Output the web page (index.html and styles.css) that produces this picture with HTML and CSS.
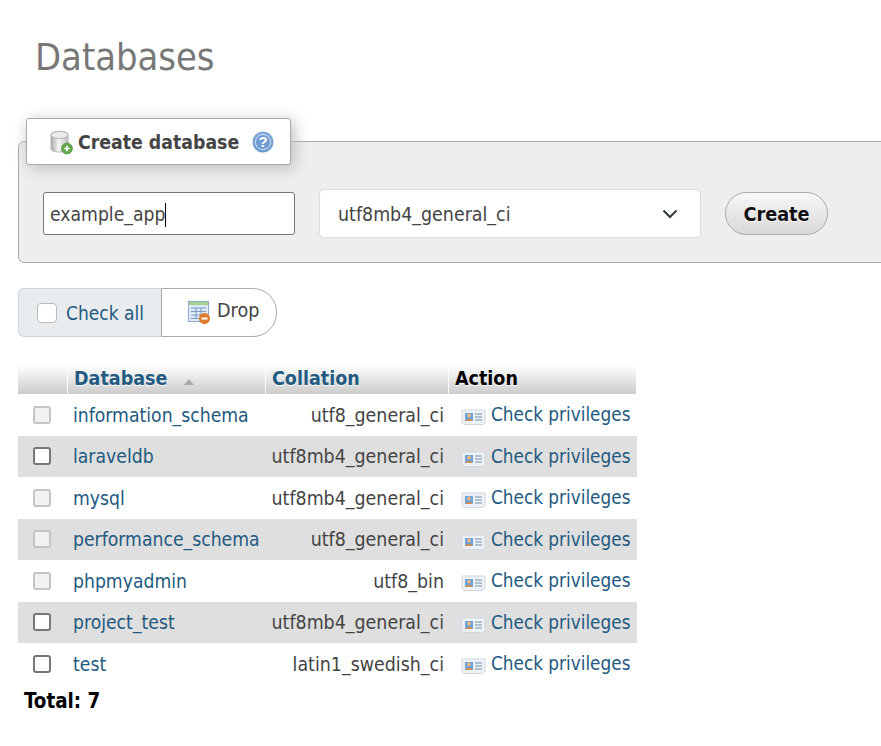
FILE: index.html
```html
<!DOCTYPE html>
<html lang="en">
<head>
<meta charset="utf-8">
<title>Databases</title>
<link rel="stylesheet" href="styles.css">
</head>
<body>
<div class="page">
  <h1 class="title">Databases</h1>
  <section class="panel">
    <div class="legend">
      <svg class="legend-icon" width="24" height="25" viewBox="0 0 24 25"><defs><linearGradient id="cyl" x1="0" x2="1" y1="0" y2="0"><stop offset="0" stop-color="#a8a8a8"/><stop offset=".45" stop-color="#f6f6f6"/><stop offset="1" stop-color="#bdbdbd"/></linearGradient></defs><path d="M1 5c0-5 17-5 17 0v14c0 4-17 4-17 0z" fill="url(#cyl)" stroke="#b4b4b4"/><ellipse cx="9.500" cy="5" rx="8.500" ry="3.500" fill="#ececec" stroke="#b4b4b4"/><circle cx="17" cy="18.500" r="5.500" fill="#65a84e" stroke="#4c8a3a" stroke-width=".6"/><path d="M14.300 18.500h5.400M17 15.800v5.400" stroke="#fff" stroke-width="1.700"/></svg>
      <span class="legend-text">Create database</span>
      <svg class="help-icon" width="22" height="22" viewBox="0 0 22 22"><defs><radialGradient id="hlp" cx=".5" cy=".45" r=".6"><stop offset="0" stop-color="#c5d9f0"/><stop offset=".7" stop-color="#7ba5d8"/><stop offset="1" stop-color="#5a8cc8"/></radialGradient></defs><circle cx="11" cy="11" r="10.500" fill="url(#hlp)"/><circle cx="11" cy="11" r="7.500" fill="#6f9bd2" stroke="#c9dcf2"/><text x="11" y="16" class="help-mark" text-anchor="middle">?</text></svg>
    </div>
    <form class="create-form">
      <div class="text-input">example_app<span class="caret"></span></div>
      <div class="select"><span>utf8mb4_general_ci</span><svg width="16" height="10" viewBox="0 0 16 10"><path d="M1.500 1.500 8 8l6.500-6.500" fill="none" stroke="#343a40" stroke-width="2"/></svg></div>
      <button type="button" class="create-btn">Create</button>
    </form>
  </section>

  <div class="bulk">
    <label class="check-all"><span class="box box-light"></span>Check all</label>
    <div class="drop">
      <svg width="24" height="25" viewBox="0 0 24 25"><rect x="1.500" y="1.500" width="20" height="20" fill="#dfe9f6" stroke="#8cabd3"/><rect x="2" y="2" width="19" height="3" fill="#a8d08d"/><path d="M4 8h15M4 11.500h15M4 15h15M4 18.500h15M9 8v11M14 8v11" stroke="#7d9cc4"/><circle cx="17.500" cy="18.500" r="5.500" fill="#e07b29"/><rect x="14.500" y="17.500" width="6" height="2" fill="#fff"/></svg>
      <span>Drop</span>
    </div>
  </div>

  <table class="db-table">
    <thead>
      <tr>
        <th class="col-check"></th>
        <th class="col-db"><span class="th-link">Database</span><span class="sort"></span></th>
        <th class="col-coll"><span class="th-link">Collation</span></th>
        <th class="col-action"><span class="th-plain">Action</span></th>
      </tr>
    </thead>
    <tbody>
      <tr><td class="cell-check"><span class="box box-off"></span></td><td class="cell-name">information_schema</td><td class="cell-coll">utf8_general_ci</td><td class="cell-action"><svg class="priv" width="25" height="19" viewBox="0 0 25 19"><use href="#card"/></svg>Check privileges</td></tr>
      <tr><td class="cell-check"><span class="box"></span></td><td class="cell-name">laraveldb</td><td class="cell-coll">utf8mb4_general_ci</td><td class="cell-action"><svg class="priv" width="25" height="19" viewBox="0 0 25 19"><use href="#card"/></svg>Check privileges</td></tr>
      <tr><td class="cell-check"><span class="box box-off"></span></td><td class="cell-name">mysql</td><td class="cell-coll">utf8mb4_general_ci</td><td class="cell-action"><svg class="priv" width="25" height="19" viewBox="0 0 25 19"><use href="#card"/></svg>Check privileges</td></tr>
      <tr><td class="cell-check"><span class="box box-off"></span></td><td class="cell-name">performance_schema</td><td class="cell-coll">utf8_general_ci</td><td class="cell-action"><svg class="priv" width="25" height="19" viewBox="0 0 25 19"><use href="#card"/></svg>Check privileges</td></tr>
      <tr><td class="cell-check"><span class="box box-off"></span></td><td class="cell-name">phpmyadmin</td><td class="cell-coll">utf8_bin</td><td class="cell-action"><svg class="priv" width="25" height="19" viewBox="0 0 25 19"><use href="#card"/></svg>Check privileges</td></tr>
      <tr><td class="cell-check"><span class="box"></span></td><td class="cell-name">project_test</td><td class="cell-coll">utf8mb4_general_ci</td><td class="cell-action"><svg class="priv" width="25" height="19" viewBox="0 0 25 19"><use href="#card"/></svg>Check privileges</td></tr>
      <tr><td class="cell-check"><span class="box"></span></td><td class="cell-name">test</td><td class="cell-coll">latin1_swedish_ci</td><td class="cell-action"><svg class="priv" width="25" height="19" viewBox="0 0 25 19"><use href="#card"/></svg>Check privileges</td></tr>
    </tbody>
  </table>
  <div class="total">Total: 7</div>
</div>
<svg class="defs" width="0" height="0"><defs><g id="card"><path d="M1 3h23v12.500l-2 2H3l-2-2z" fill="#eef2f7" stroke="#d0d7df"/><rect x="4" y="6" width="8" height="8" fill="#6aa3df"/><circle cx="8" cy="8.500" r="2" fill="#e9b384"/><path d="M4.500 14c.5-3 6.500-3 7 0z" fill="#d08c4e"/><path d="M14 7h7M14 10h7M14 13h7" stroke="#9bb0c6" stroke-width="1.300"/></g></defs></svg>
</body>
</html>
```
FILE: styles.css
```css
* { box-sizing: border-box; }
html, body { margin: 0; padding: 0; background: #fff; overflow: hidden; }
body { height: 746px; font-family: "DejaVu Sans Condensed", "DejaVu Sans", sans-serif; font-stretch: condensed; font-size: 19.200px; color: #444; }
.page { width: 900px; padding: 33px 0 0 18px; }
.title { margin: 0 0 0 17px; font-size: 37.700px; line-height: 48px; font-weight: 400; color: #777; }
.panel { position: relative; margin-top: 60px; width: 900px; height: 122px; background: #eee; border: 1px solid #aaa; border-radius: 6px 0 0 6px; padding: 47px 0 0 24px; }
.legend { position: absolute; left: 7px; top: -24px; width: 265px; height: 47px; background: #fff; border: 1px solid #aaa; border-radius: 3px; box-shadow: 3px 3px 15px #bbb; display: flex; align-items: center; padding-left: 23px; }
.legend-icon { margin-top: 2px; flex: none; }
.legend-text { margin-left: 4px; padding-top: 2px; font-weight: 700; color: #444; font-size: 19.300px; white-space: nowrap; }
.help-icon { margin-left: 13px; flex: none; }
.help-mark { font-size: 15px; font-weight: 700; fill: #fff; font-family: "Liberation Sans", sans-serif; }
.create-form { display: flex; align-items: center; }
.text-input { width: 252px; height: 43px; background: #fff; border: 1px solid #767676; border-radius: 3px; padding: 2px 0 0 6px; display: flex; align-items: center; color: #444; }
.caret { width: 1px; height: 24px; background: #000; }
.select { margin-left: 24px; width: 382px; height: 49px; background: #fff; border: 1px solid #ddd; border-radius: 5px; padding: 0 22px 0 18px; display: flex; align-items: center; justify-content: space-between; color: #444; font-size: 19.400px; }
.select span { padding-top: 2px; }
.create-btn { margin-left: 24px; width: 103px; height: 43px; border: 1px solid #aaa; border-radius: 22px; background: linear-gradient(#f8f8f8, #d8d8d8); font: 700 19.700px "DejaVu Sans Condensed", "DejaVu Sans", sans-serif; font-stretch: condensed; color: #111; text-shadow: 0 1px 0 #fff; padding: 2px 0 0; }
.bulk { display: flex; margin-top: 25px; height: 49px; }
.check-all { width: 143px; background: #e9ecef; border: 1px solid #ced4da; border-right: 0; border-radius: 6px 0 0 6px; display: flex; align-items: center; padding-left: 18px; color: #235a81; font-size: 19px; }
.box { display: block; width: 18px; height: 18px; border: 2px solid #767676; border-radius: 3px; background: #fff; }
.box-light { width: 20px; height: 20px; border: 1px solid #bbb; margin-right: 9px; border-radius: 4px; }
.box-off { border-color: #c5c5c5; background: #f1f1f1; }
.drop { width: 116px; background: #fff; border: 1px solid #aaa; border-radius: 0 24px 24px 0; display: flex; align-items: center; padding-left: 25px; gap: 6px; color: #444; font-size: 19.600px; }
.drop span { position: relative; top: -2px; }
.db-table { margin-top: 28px; border-collapse: separate; border-spacing: 0; width: 619px; table-layout: fixed; }
.db-table th { height: 29px; padding: 0 0 3px 6px; text-align: left; font-size: 19.500px; font-weight: 700; color: #000; background: linear-gradient(#fff, #ccc); border-right: 1px solid #fff; white-space: nowrap; }
.col-check { width: 50px; }
.col-db { width: 198px; }
.col-coll { width: 183px; }
.col-action { width: 188px; }
.th-link { color: #235a81; text-shadow: 0 1px 0 #fff; }
.th-plain { text-shadow: 0 1px 0 #fff; }
.sort { display: inline-block; margin-left: 17px; width: 0; height: 0; border: 5.500px solid transparent; border-top: 0; border-bottom: 6px solid #aaa; vertical-align: 0; }
.db-table td { height: 41.500px; padding: 1px 0 0; white-space: nowrap; }
.db-table tbody tr:nth-child(even) td { background: #dfdfdf; }
.db-table .cell-check { padding: 0 0 0 15px; }
.db-table .cell-name { padding-left: 5px; color: #235a81; }
.db-table .cell-coll { text-align: right; padding-right: 5px; font-size: 19.400px; }
.db-table .cell-action { padding-left: 12px; color: #235a81; font-size: 18.800px; }
.priv { vertical-align: -5px; margin-right: 5px; }
.total { margin: 2px 0 0 6px; font-weight: 700; font-size: 20.400px; color: #000; line-height: 28px; }
.defs { position: absolute; }
```
